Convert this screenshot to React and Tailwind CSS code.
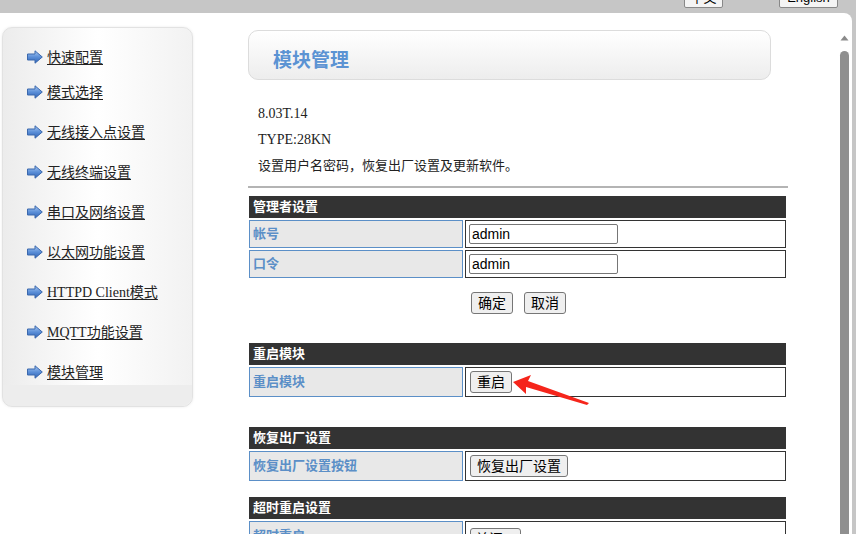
import React from 'react';

const menu = [
  '快速配置',
  '模式选择',
  '无线接入点设置',
  '无线终端设置',
  '串口及网络设置',
  '以太网功能设置',
  'HTTPD Client模式',
  'MQTT功能设置',
  '模块管理',
];

// 左侧菜单的蓝色箭头
const BlueArrow = () => (
  <svg width="16" height="14" viewBox="0 0 16 14" className="shrink-0">
    <defs>
      <linearGradient id="ba" x1="0" y1="0" x2="0" y2="1">
        <stop offset="0" stopColor="#a9c9f2" />
        <stop offset="0.5" stopColor="#5b8fd8" />
        <stop offset="1" stopColor="#2f63b5" />
      </linearGradient>
    </defs>
    <polygon points="0.5,4 8,4 8,0.8 15.3,7 8,13.2 8,10 0.5,10" fill="url(#ba)" stroke="#3b68ad" strokeWidth="1" />
  </svg>
);

const Btn = ({ children, className = '' }) => (
  <button className={`h-[22px] px-[6px] border border-[#767676] rounded-[3px] bg-[#efefef] text-[14px] leading-none text-black ${className}`}>
    {children}
  </button>
);

const Header = ({ title }) => (
  <div className="h-[22px] bg-[#333333] text-white font-bold text-[13px] leading-[22px] pl-[4px]">{title}</div>
);

const Row = ({ label, h = 'h-[28px]', children }) => (
  <div className={`flex gap-[2px] ${h}`}>
    <div className="w-[214px] bg-[#e8e8e8] border border-[#5b8fc7] text-[#5b8fc7] font-bold text-[13px] flex items-center pl-[3px]">
      {label}
    </div>
    <div className="flex-1 border border-[#333] bg-white flex items-center pl-[3px]">{children}</div>
  </div>
);

const Input = ({ value }) => (
  <div className="w-[149px] h-[20px] border border-[#767676] rounded-[2px] text-[14px] leading-[18px] pl-[2px] text-black" style={{ fontFamily: '"Liberation Sans", Arial, sans-serif' }}>
    {value}
  </div>
);

export default function App() {
  return (
    <div
      className="relative w-[856px] h-[534px] overflow-hidden bg-[#c6c6c6] flex flex-col"
      style={{ fontFamily: '"Liberation Sans", "Noto Sans CJK SC", sans-serif' }}
    >
      {/* 顶部语言按钮 */}
      <div className="h-[13px] shrink-0 flex items-end pb-[5px]">
        <div className="ml-[684px] w-[39px] h-[20px] border border-[#888] rounded-[2px] bg-[#f4f4f4] text-[13px] text-center leading-[18px]">中文</div>
        <div className="ml-[56px] w-[59px] h-[20px] border border-[#888] rounded-[2px] bg-[#f4f4f4] text-[13px] text-center leading-[18px]">English</div>
      </div>

      {/* 白色主面板 */}
      <div className="flex-1 w-[852px] bg-white rounded-tr-[8px] flex">
        <div className="w-[840px] flex">
          {/* 左侧菜单 */}
          <div className="ml-[2px] mt-[14px] w-[191px] h-[380px] rounded-[10px] border border-[#e2e2e2] bg-gradient-to-r from-[#ececec] via-white to-[#f2f2f2] flex flex-col shadow-[0_0_3px_rgba(0,0,0,0.08)]">
            <div className="flex-1 flex flex-col pt-[20px] pl-[24px]" style={{ fontFamily: '"Liberation Serif", "Noto Sans CJK SC", serif' }}>
              {menu.map((m, i) => (
                <div key={m} className={`flex items-center gap-[4px] h-[18px] ${i === 0 ? '' : i === 1 ? 'mt-[17px]' : 'mt-[22px]'}`}>
                  <BlueArrow />
                  <span className="text-[14px] text-[#222] underline underline-offset-2">{m}</span>
                </div>
              ))}
            </div>
            <div className="h-[21px] rounded-b-[10px] bg-[#ededed]" />
          </div>

          {/* 右侧内容 */}
          <div className="ml-[55px] w-[540px] flex flex-col">
            <div className="mt-[17px] w-[523px] h-[50px] rounded-[10px] border border-[#dcdcdc] bg-gradient-to-b from-white to-[#ededed] flex items-center pl-[24px] pt-[8px]">
              <span className="text-[19px] font-bold text-[#5b93d3]" style={{ fontFamily: '"Noto Sans CJK SC", sans-serif' }}>模块管理</span>
            </div>

            <div className="mt-[21px] pl-[10px] text-[14px] text-[#222] leading-[26px]" style={{ fontFamily: '"Liberation Serif", "Noto Sans CJK SC", serif' }}>
              <div>8.03T.14</div>
              <div>TYPE:28KN</div>
              <div className="text-[13px]">设置用户名密码，恢复出厂设置及更新软件。</div>
            </div>

            <div className="mt-[7px] h-[2px] bg-[#b4b4b4]" />

            {/* 管理者设置 */}
            <div className="mt-[8px] ml-[1px] w-[537px] flex flex-col gap-[2px]">
              <Header title="管理者设置" />
              <Row label="帐号"><Input value="admin" /></Row>
              <Row label="口令"><Input value="admin" /></Row>
            </div>
            <div className="mt-[14px] ml-[223px] flex gap-[11px]">
              <Btn>确定</Btn>
              <Btn>取消</Btn>
            </div>

            {/* 重启模块 */}
            <div className="mt-[29px] ml-[1px] w-[537px] flex flex-col gap-[2px]">
              <Header title="重启模块" />
              <Row label="重启模块" h="h-[30px]"><Btn className="ml-[1px]">重启</Btn></Row>
            </div>

            {/* 恢复出厂设置 */}
            <div className="mt-[30px] ml-[1px] w-[537px] flex flex-col gap-[2px]">
              <Header title="恢复出厂设置" />
              <Row label="恢复出厂设置按钮" h="h-[30px]"><Btn className="ml-[1px]">恢复出厂设置</Btn></Row>
            </div>

            {/* 超时重启设置 */}
            <div className="mt-[16px] ml-[1px] w-[537px] flex flex-col gap-[2px]">
              <Header title="超时重启设置" />
              <Row label="超时重启" h="h-[30px]">
                <div className="ml-[1px] mt-[6px] self-start h-[22px] px-[4px] border border-[#767676] rounded-[3px] bg-[#efefef] text-[14px] flex items-center gap-[4px]">
                  关闭
                  <svg width="9" height="6" viewBox="0 0 9 6"><path d="M1 1l3.5 3.5L8 1" stroke="#222" strokeWidth="1.6" fill="none" /></svg>
                </div>
              </Row>
            </div>
          </div>
        </div>

        {/* 滚动条 */}
        <div className="w-[12px] pt-[20px] flex flex-col items-start">
          <svg width="9" height="6" viewBox="0 0 9 6" className="mt-[2px]"><polygon points="4.5,0.5 8.5,5.5 0.5,5.5" fill="#8a8a8a" /></svg>
          <div className="mt-[10px] w-[9px] flex-1 rounded-t-[5px] bg-[#8f8f8f]" />
        </div>
      </div>

      {/* 红色指示箭头 */}
      <svg className="absolute left-[508px] top-[374px]" width="84" height="34" viewBox="0 0 84 34">
        <polygon points="5,8 23,1 20,7 81,29 79,31 18,13 18,20" fill="#f5251b" />
      </svg>
    </div>
  );
}
